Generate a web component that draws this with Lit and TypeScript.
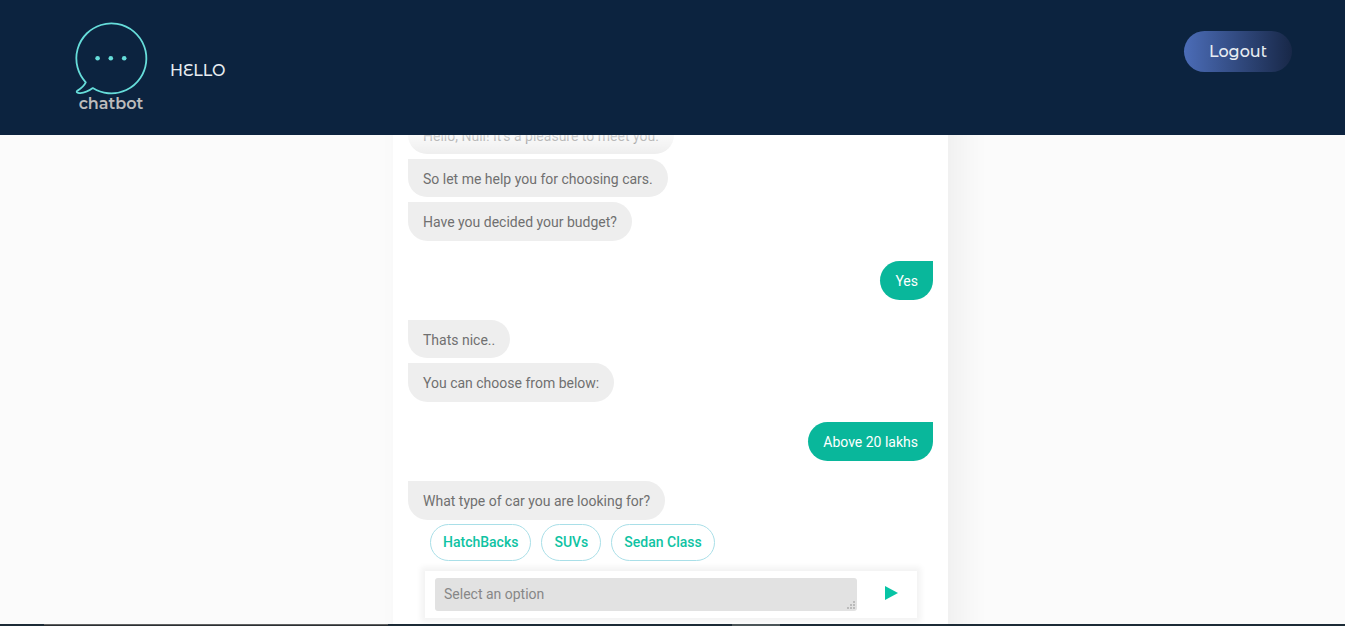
import { LitElement, html, css, svg } from "lit";
import { customElement, state } from "lit/decorators.js";

interface Turn {
  from: "bot" | "user";
  lines: string[];
}

@customElement("app-root")
export class AppRoot extends LitElement {
  static styles = css`
    :host {
      display: flex;
      flex-direction: column;
      height: 100vh;
      overflow: hidden;
      background: #fbfbfb;
      font-family: Roboto, "Liberation Sans", sans-serif;
      font-size: 14px;
    }
    * {
      box-sizing: border-box;
    }
    .header {
      flex: none;
      position: relative;
      z-index: 2;
      display: flex;
      align-items: flex-start;
      justify-content: space-between;
      height: 135px;
      padding: 20px 53px 0 74px;
      background: #0c233f;
      color: #e8edf2;
      font-family: "Montserrat Alternates", Montserrat, Inter, sans-serif;
      font-size: 16px;
      font-weight: 500;
      line-height: 20px;
    }
    .brand {
      display: flex;
      align-items: center;
      gap: 22px;
    }
    .logo {
      display: flex;
      flex-direction: column;
      align-items: center;
      width: 74px;
      color: #bcbcbc;
      font-family: Montserrat, Inter, sans-serif;
      font-weight: 600;
    }
    .logo svg {
      display: block;
      width: 74px;
      height: 74px;
      overflow: visible;
    }
    .hello {
      margin-top: 8px;
    }
    .logout {
      width: 108px;
      height: 41px;
      margin-top: 11px;
      padding: 0;
      border: 0;
      border-radius: 21px;
      background: linear-gradient(90deg, #4b6cb7, #182848);
      color: #e8edf2;
      font: inherit;
    }
    .main {
      flex: 1;
      min-height: 0;
      overflow: hidden;
      display: flex;
      justify-content: center;
      padding-right: 4px;
    }
    .panel {
      position: relative;
      display: flex;
      flex-direction: column;
      justify-content: flex-end;
      width: 100%;
      max-width: 555px;
      margin: -30px 0;
      padding: 0 15px 36px;
      background: #fff;
      box-shadow: 14px 0 30px rgba(0, 0, 0, 0.05);
    }
    .panel::before {
      content: "";
      position: absolute;
      z-index: 1;
      inset: 30px 0 auto 0;
      height: 20px;
      background: linear-gradient(rgba(255, 255, 255, 0.7), rgba(255, 255, 255, 0));
    }
    .log {
      display: flex;
      flex-direction: column;
      gap: 20px;
    }
    .turn {
      display: flex;
      flex-direction: column;
      align-items: flex-start;
      gap: 5px;
    }
    .turn.user {
      align-items: flex-end;
    }
    .bubble {
      margin: 0;
      padding: 11px 15px 9px;
      border-radius: 0 20px 20px 20px;
      background: #eee;
      color: #707070;
      line-height: 18px;
    }
    .bubble:last-child {
      padding-bottom: 10px;
    }
    .user .bubble {
      border-radius: 20px 0 20px 20px;
      background: #09b79b;
      color: #fff;
    }
    .chips {
      display: flex;
      gap: 10px;
      margin: 4px 0 10px 22px;
    }
    .chip {
      height: 37px;
      padding: 0 12px 1px;
      border: 1px solid #a9dfe8;
      border-radius: 19px;
      background: #fff;
      color: #0fc3a3;
      font: inherit;
      font-weight: 500;
    }
    .composer {
      display: flex;
      align-items: center;
      margin: 0 16px 0 17px;
      padding: 7px 10px;
      background: #fff;
      box-shadow: 0 0 6px 4px rgba(0, 0, 0, 0.05);
    }
    .field {
      position: relative;
      flex: 1;
      display: flex;
    }
    .field textarea {
      flex: 1;
      height: 33px;
      padding: 7px 9px;
      border: 0;
      border-radius: 3px;
      outline: 0;
      resize: none;
      overflow: hidden;
      background: #e2e2e2;
      color: #6b6b6b;
      font: inherit;
      line-height: 18px;
    }
    .field textarea::placeholder {
      color: #878787;
    }
    .grip {
      position: absolute;
      right: 2px;
      bottom: 2px;
      width: 8px;
      height: 8px;
      fill: #bbb;
      pointer-events: none;
    }
    .send {
      display: flex;
      align-items: center;
      justify-content: center;
      width: 50px;
      height: 33px;
      padding: 0 0 3px 18px;
      border: 0;
      background: none;
    }
    .send svg {
      width: 13px;
      height: 14px;
      fill: #06c4a5;
    }
    .strip {
      flex: none;
      position: relative;
      z-index: 2;
      display: grid;
      grid-template-columns: 44fr 344fr 344fr 48fr 565fr;
      height: 2px;
      background: #1c2b36;
    }
    .window {
      grid-column: 2;
      border-top: 1px solid #5f6060;
      background: #2b2f33;
    }
    .tab {
      grid-column: 4;
      background: #4c5659;
    }
  `;

  @state() private draft = "";

  private turns: Turn[] = [
    {
      from: "bot",
      lines: [
        "Hello, Null! It's a pleasure to meet you.",
        "So let me help you for choosing cars.",
        "Have you decided your budget?",
      ],
    },
    { from: "user", lines: ["Yes"] },
    { from: "bot", lines: ["Thats nice..", "You can choose from below:"] },
    { from: "user", lines: ["Above 20 lakhs"] },
    { from: "bot", lines: ["What type of car you are looking for?"] },
  ];

  private options = ["HatchBacks", "SUVs", "Sedan Class"];

  private pick(option: string) {
    this.draft = option;
  }

  render() {
    return html`
      <header class="header">
        <div class="brand">
          <div class="logo">
            <svg viewBox="0 0 74 74" fill="none" aria-hidden="true">
              <path
                d="M11.3 61.8A35 35 0 1 1 18.8 68.1C14 71.6 8 73.6 4 72.8C2.2 72.4 2.4 71.4 3.6 70.6C7 68.6 10 66 11.8 62.4Z"
                stroke="#66ddda"
                stroke-width="1.8"
                stroke-linejoin="round"
              />
              ${[23.6, 36.8, 50.2].map((x) => svg`<circle cx=${x} cy="38.3" r="2.3" fill="#66ddda" />`)}
            </svg>
            <span>chatbot</span>
          </div>
          <span class="hello">HELLO</span>
        </div>
        <button class="logout" type="button">Logout</button>
      </header>
      <main class="main">
        <section class="panel">
          <div class="log">
            ${this.turns.map(
              (turn) => html`<div class="turn ${turn.from}">
                ${turn.lines.map((line) => html`<p class="bubble">${line}</p>`)}
              </div>`
            )}
          </div>
          <div class="chips">
            ${this.options.map(
              (option) =>
                html`<button class="chip" type="button" @click=${() => this.pick(option)}>${option}</button>`
            )}
          </div>
          <form class="composer" @submit=${(e: Event) => e.preventDefault()}>
            <div class="field">
              <textarea rows="1" aria-label="Message" placeholder="Select an option" .value=${this.draft}></textarea>
              <svg class="grip" viewBox="0 0 8 8" aria-hidden="true">
                <path d="M6 0h2v2H6zM3 3h2v2H3zM6 3h2v2H6zM0 6h2v2H0zM3 6h2v2H3zM6 6h2v2H6z" />
              </svg>
            </div>
            <button class="send" type="submit" aria-label="Send">
              <svg viewBox="0 0 13 14" aria-hidden="true"><path d="M0 0L13 7L0 14Z" /></svg>
            </button>
          </form>
        </section>
      </main>
      <footer class="strip"><span class="window"></span><span class="tab"></span></footer>
    `;
  }
}
